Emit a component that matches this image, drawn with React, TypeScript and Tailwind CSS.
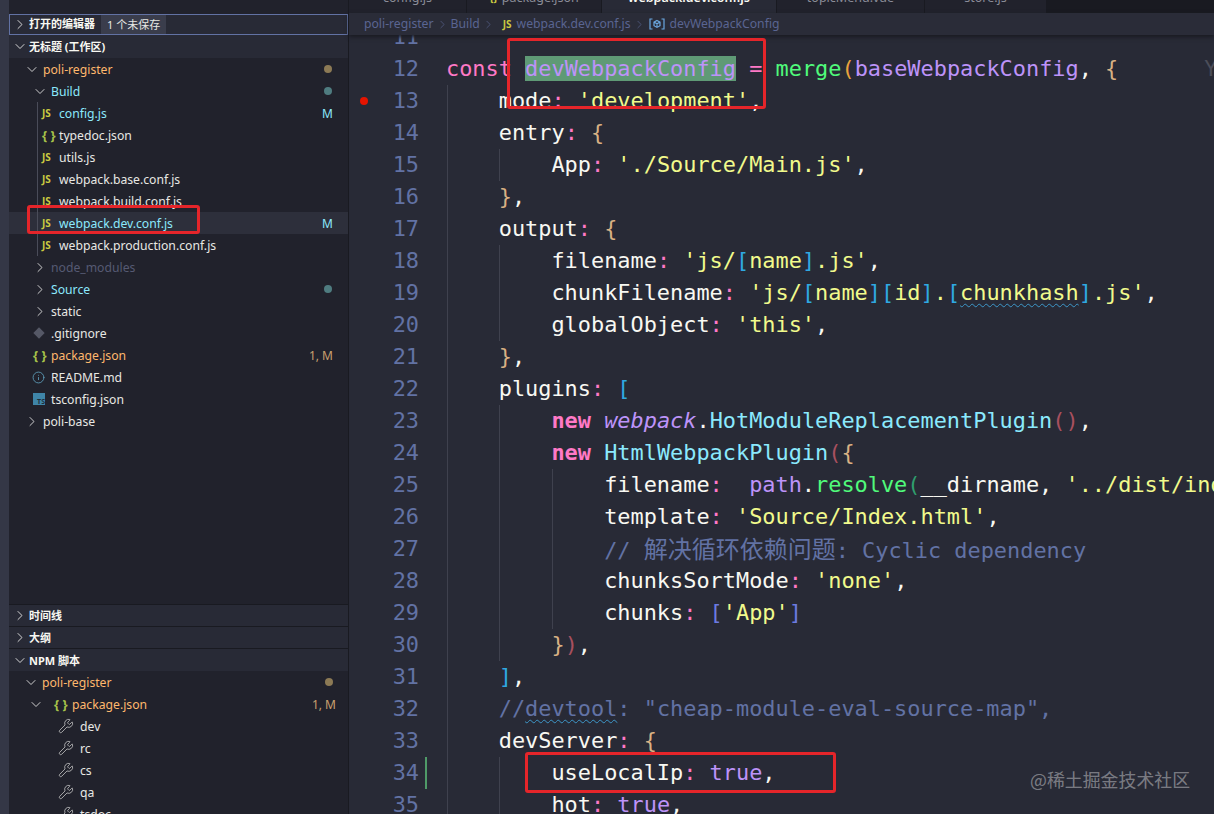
import React from "react";
import { ChevronRight, ChevronDown, Info, Wrench } from "lucide-react";

const SANS = "font-['Noto_Sans','Noto_Sans_CJK_SC',sans-serif]";

const W = ({ children }: { children: React.ReactNode }) => <span className="text-[#f8f8f2]">{children}</span>;
const P = ({ children }: { children: React.ReactNode }) => <span className="text-[#ff79c6]">{children}</span>;
const V = ({ children }: { children: React.ReactNode }) => <span className="text-[#bd93f9]">{children}</span>;
const G = ({ children }: { children: React.ReactNode }) => <span className="text-[#50fa7b]">{children}</span>;
const Y = ({ children }: { children: React.ReactNode }) => <span className="text-[#f1fa8c]">{children}</span>;
const C = ({ children }: { children: React.ReactNode }) => <span className="text-[#8be9fd]">{children}</span>;
const B = ({ children }: { children: React.ReactNode }) => <span className="text-[#d9b184]">{children}</span>;
const K = ({ children }: { children: React.ReactNode }) => <span className="text-[#6272a4]">{children}</span>;
const S = ({ children }: { children: React.ReactNode }) => <span className="text-[#2fa9e2]">{children}</span>;
const Q = ({ children }: { children: React.ReactNode }) => (
  <span className="underline decoration-wavy decoration-[#3d97c9] decoration-1 underline-offset-[3px]">{children}</span>
);

type Line = { n: number; g: number; code: React.ReactNode };

const lines: Line[] = [
  { n: 11, g: 0, code: null },
  {
    n: 12,
    g: 0,
    code: (
      <>
        <P>const</P> <span className="bg-[#5f9a76] text-[#bd93f9]">devWebpackConfig</span> <P>=</P> <G>merge</G>
        <span className="text-[#e8a33d]">(</span>
        <V>baseWebpackConfig</V>
        <W>,</W> <B>{"{"}</B>
        <span className="ml-[86px] text-[#4b4d59]">You</span>
      </>
    ),
  },
  { n: 13, g: 1, code: <>    <W>mode</W><P>:</P> <Y>'development'</Y><W>,</W></> },
  { n: 14, g: 1, code: <>    <W>entry</W><P>:</P> <B>{"{"}</B></> },
  { n: 15, g: 2, code: <>        <W>App</W><P>:</P> <Y>'./Source/Main.js'</Y><W>,</W></> },
  { n: 16, g: 1, code: <>    <B>{"}"}</B><W>,</W></> },
  { n: 17, g: 1, code: <>    <W>output</W><P>:</P> <B>{"{"}</B></> },
  { n: 18, g: 2, code: <>        <W>filename</W><P>:</P> <Y>'js/</Y><S>[</S><Y>name</Y><S>]</S><Y>.js'</Y><W>,</W></> },
  {
    n: 19,
    g: 2,
    code: (
      <>
        {"        "}<W>chunkFilename</W><P>:</P> <Y>'js/</Y><S>[</S><Y>name</Y><S>]</S><S>[</S><Y>id</Y><S>]</S><Y>.</Y><S>[</S>
        <span className="text-[#f1fa8c]"><Q>chunkhash</Q></span><S>]</S><Y>.js'</Y><W>,</W>
      </>
    ),
  },
  { n: 20, g: 2, code: <>        <W>globalObject</W><P>:</P> <Y>'this'</Y><W>,</W></> },
  { n: 21, g: 1, code: <>    <B>{"}"}</B><W>,</W></> },
  { n: 22, g: 1, code: <>    <W>plugins</W><P>:</P> <S>[</S></> },
  {
    n: 23,
    g: 2,
    code: (
      <>
        {"        "}<span className="font-bold text-[#ff79c6]">new</span> <span className="italic text-[#bd93f9]">webpack</span><W>.</W><C>HotModuleReplacementPlugin</C>
        <span className="text-[#a8505f]">()</span><W>,</W>
      </>
    ),
  },
  {
    n: 24,
    g: 2,
    code: (
      <>
        {"        "}<span className="font-bold text-[#ff79c6]">new</span> <C>HtmlWebpackPlugin</C><span className="text-[#a8505f]">(</span><B>{"{"}</B>
      </>
    ),
  },
  {
    n: 25,
    g: 3,
    code: (
      <>
        {"            "}<W>filename</W><P>:</P>  <V>path</V><W>.</W><G>resolve</G><span className="text-[#2f9e6e]">(</span><W>__dirname,</W> <Y>'../dist/index.html'</Y><W>,</W>
      </>
    ),
  },
  { n: 26, g: 3, code: <>            <W>template</W><P>:</P> <Y>'Source/Index.html'</Y><W>,</W></> },
  {
    n: 27,
    g: 3,
    code: (
      <>
        {"            "}<K>// </K>
        <span className="font-['Noto_Sans_CJK_SC',sans-serif] text-[24px] text-[#6272a4]">解决循环依赖问题</span>
        <K>: Cyclic dependency</K>
      </>
    ),
  },
  { n: 28, g: 3, code: <>            <W>chunksSortMode</W><P>:</P> <Y>'none'</Y><W>,</W></> },
  { n: 29, g: 3, code: <>            <W>chunks</W><P>:</P> <span className="text-[#6c7be0]">[</span><Y>'App'</Y><span className="text-[#6c7be0]">]</span></> },
  { n: 30, g: 2, code: <>        <B>{"}"}</B><span className="text-[#a8505f]">)</span><W>,</W></> },
  { n: 31, g: 1, code: <>    <S>]</S><W>,</W></> },
  { n: 32, g: 1, code: <>    <K>//<Q>devtool</Q>: "cheap-module-eval-source-map",</K></> },
  { n: 33, g: 1, code: <>    <W>devServer</W><P>:</P> <B>{"{"}</B></> },
  { n: 34, g: 2, code: <>        <W>useLocalIp</W><P>:</P> <V>true</V><W>,</W></> },
  { n: 35, g: 2, code: <>        <W>hot</W><P>:</P> <V>true</V><W>,</W></> },
];

const GUIDES = ["left-[98px]", "left-[150px]", "left-[203px]"];

function CodeLine({ line }: { line: Line }) {
  return (
    <div className="relative flex h-[32px] items-center">
      {GUIDES.slice(0, line.g).map((g) => (
        <span key={g} className={`absolute top-0 h-full w-px bg-[#3f414e] ${g}`} />
      ))}
      {line.n === 13 && <span className="absolute left-[11px] top-[12px] h-[8px] w-[8px] rounded-full bg-[#e51400]" />}
      {line.n === 34 && <span className="absolute left-[76px] top-0 h-full w-[2px] bg-[#4f9a68]" />}
      <span className="w-[70px] shrink-0 text-right text-[#6272a4]">{line.n}</span>
      <span className="relative ml-[27px] whitespace-pre text-[#f8f8f2]">{line.code}</span>
    </div>
  );
}

const Js = () => <span className="w-[14px] text-[10px] font-bold leading-none text-[#cbcb41]">JS</span>;
const Braces = () => <span className="w-[14px] text-[13px] font-bold leading-none text-[#a7c44a]">{"{ }"}</span>;

type RowProps = {
  pad: string;
  chevron?: "r" | "d";
  chevGap?: string;
  icon?: React.ReactNode;
  iconGap?: string;
  text: string;
  color?: string;
  right?: React.ReactNode;
  active?: boolean;
  endPad?: string;
};

function Row({ pad, chevron, chevGap = "mr-[3px]", icon, iconGap = "mr-[4px]", text, color = "text-[#e8e8e4]", right, active, endPad = "pr-[15px]" }: RowProps) {
  return (
    <div className={`flex h-[22px] items-center ${endPad} ${pad} ${active ? "bg-[#2d2f3b]" : ""}`}>
      {chevron && (
        <span className={`flex w-[16px] justify-center text-[#d8d8d8] ${chevGap}`}>
          {chevron === "r" ? <ChevronRight size={17} strokeWidth={1.4} /> : <ChevronDown size={17} strokeWidth={1.4} />}
        </span>
      )}
      {icon && <span className={`flex items-center ${iconGap}`}>{icon}</span>}
      <span className={`pt-[2px] text-[12.2px] leading-none ${color}`}>{text}</span>
      {right && <span className="ml-auto flex items-center">{right}</span>}
    </div>
  );
}

const Dot = ({ color }: { color: string }) => <span className={`mr-[1px] h-[8px] w-[8px] rounded-full ${color}`} />;
const Mod = ({ t, color }: { t: string; color: string }) => <span className={`pt-[2px] text-[12px] leading-none ${color}`}>{t}</span>;

function Header({ open, h = "h-[22px]", children }: { open?: boolean; h?: string; children: React.ReactNode }) {
  return (
    <div className={`flex shrink-0 items-center border-t border-[#191a21] pl-[3px] text-[11px] font-bold text-[#f8f8f2] ${h}`}>
      <span className="mr-[1px] flex w-[16px] justify-center text-[#e0e0e0]">
        {open ? <ChevronDown size={17} strokeWidth={1.4} /> : <ChevronRight size={17} strokeWidth={1.4} />}
      </span>
      <span className="pt-[2px]">{children}</span>
    </div>
  );
}

const Tab = ({ w, text, icon, active }: { w: string; text: string; icon?: React.ReactNode; active?: boolean }) => (
  <div className={`flex h-[13px] items-start justify-center overflow-hidden border-r border-[#191a21] ${w} ${active ? "bg-[#282a36]" : "bg-[#21222c]"}`}>
    <div className={`-mt-[11px] flex items-center gap-[4px] text-[12.5px] ${active ? "font-semibold text-[#f8f8f2]" : "text-[#8b8d98]"}`}>
      {icon}
      {text}
    </div>
  </div>
);

export default function App() {
  return (
    <div className={`relative flex h-[814px] w-[1214px] overflow-hidden bg-[#282a36] ${SANS}`}>
      <div className="w-[9px] shrink-0 bg-[#343746]" />

      <aside className="flex h-full w-[340px] shrink-0 flex-col overflow-hidden border-r border-[#191a21] bg-[#282a36]">
        <div className="h-[14px] shrink-0 overflow-hidden bg-[#21222c] pl-[20px] text-[11px] font-bold text-[#f8f8f2]">
          <div className="-mt-[14px]">资源管理器: 无标题</div>
        </div>
        <div className="flex h-[21px] shrink-0 items-center border border-[#6272a4] pl-[2px] text-[11px] font-bold text-[#f8f8f2]">
          <span className="mr-[1px] flex w-[16px] justify-center text-[#e0e0e0]">
            <ChevronRight size={17} strokeWidth={1.4} />
          </span>
          <span>打开的编辑器</span>
          <span className="ml-[6px] bg-[#3a3d4c] px-[6px] text-[11px] font-normal leading-[19px] text-[#e8e8e4]">1 个未保存</span>
        </div>
        <div className="flex h-[23px] shrink-0 items-center pl-[3px] text-[11px] font-bold text-[#f8f8f2]">
          <span className="mr-[1px] flex w-[16px] justify-center text-[#e0e0e0]">
            <ChevronDown size={17} strokeWidth={1.4} />
          </span>
          <span className="pt-[2px]">无标题 (工作区)</span>
        </div>

        <div className="relative h-[546px] shrink-0 bg-[#21222c]">
          <span className="absolute left-[28px] top-[44px] h-[154px] w-px bg-[#4a4c59]" />
          <Row pad="pl-[15px]" chevron="d" text="poli-register" color="text-[#ffb86c]" right={<Dot color="bg-[#8c7a55]" />} />
          <Row pad="pl-[23px]" chevron="d" text="Build" color="text-[#8be9fd]" right={<Dot color="bg-[#4f7c80]" />} />
          <Row pad="pl-[33px]" icon={<Js />} iconGap="mr-[3px]" text="config.js" color="text-[#8be9fd]" right={<Mod t="M" color="text-[#8be9fd]" />} />
          <Row pad="pl-[33px]" icon={<Braces />} iconGap="mr-[3px]" text="typedoc.json" />
          <Row pad="pl-[33px]" icon={<Js />} iconGap="mr-[3px]" text="utils.js" />
          <Row pad="pl-[33px]" icon={<Js />} iconGap="mr-[3px]" text="webpack.base.conf.js" />
          <Row pad="pl-[33px]" icon={<Js />} iconGap="mr-[3px]" text="webpack.build.conf.js" />
          <Row pad="pl-[33px]" icon={<Js />} iconGap="mr-[3px]" text="webpack.dev.conf.js" color="text-[#8be9fd]" active right={<Mod t="M" color="text-[#8be9fd]" />} />
          <Row pad="pl-[33px]" icon={<Js />} iconGap="mr-[3px]" text="webpack.production.conf.js" />
          <Row pad="pl-[23px]" chevron="r" text="node_modules" color="text-[#565a73]" />
          <Row pad="pl-[23px]" chevron="r" text="Source" color="text-[#8be9fd]" right={<Dot color="bg-[#4f7c80]" />} />
          <Row pad="pl-[23px]" chevron="r" text="static" />
          <Row
            pad="pl-[25px]"
            icon={<span className="ml-[1px] h-[8px] w-[8px] rotate-45 bg-[#555866]" />}
            iconGap="mr-[8px]"
            text=".gitignore"
          />
          <Row pad="pl-[24px]" icon={<Braces />} iconGap="mr-[4px]" text="package.json" color="text-[#ffb86c]" right={<Mod t="1, M" color="text-[#c9a06f]" />} />
          <Row pad="pl-[23px]" icon={<Info size={13} strokeWidth={1.6} className="text-[#5d9cb8]" />} iconGap="mr-[6px]" text="README.md" />
          <Row
            pad="pl-[24px]"
            icon={
              <span className="flex h-[12px] w-[12px] items-end justify-end bg-[#3f85a8] text-[7px] font-bold leading-none text-[#20303c]">TS</span>
            }
            iconGap="mr-[6px]"
            text="tsconfig.json"
          />
          <Row pad="pl-[15px]" chevron="r" text="poli-base" />
        </div>

        <Header>时间线</Header>
        <Header>大纲</Header>
        <Header open h="h-[23px]">NPM 脚本</Header>

        <div className="flex-1 bg-[#21222c]">
          <Row pad="pl-[14px]" endPad="pr-[14px]" chevron="d" chevGap="mr-[3px]" text="poli-register" color="text-[#ffb86c]" right={<Dot color="bg-[#8c7a55]" />} />
          <Row
            pad="pl-[19px]"
            endPad="pr-[12px]"
            chevron="d"
            chevGap="mr-[10px]"
            icon={<Braces />}
            iconGap="mr-[4px]"
            text="package.json"
            color="text-[#ffb86c]"
            right={<Mod t="1, M" color="text-[#c9a06f]" />}
          />
          {["dev", "rc", "cs", "qa", "tsdoc"].map((t) => (
            <Row key={t} pad="pl-[49px]" icon={<Wrench size={16} strokeWidth={1.2} className="text-[#c4c4c4]" />} iconGap="mr-[6px]" text={t} />
          ))}
        </div>
      </aside>

      <main className="flex h-full min-w-0 flex-1 flex-col">
        <div className="flex h-[13px] shrink-0 bg-[#191a21]">
          <Tab w="w-[118px]" text="config.js" />
          <Tab w="w-[135px]" text="package.json" icon={<span className="text-[11px] font-bold text-[#cbcb41]">{"{}"}</span>} />
          <Tab w="w-[175px]" text="webpack.dev.conf.js" active />
          <Tab w="w-[148px]" text="topicMenu.vue" />
          <Tab w="w-[122px]" text="store.js" />
        </div>
        <div className="relative z-10 flex h-[22px] shrink-0 items-center bg-[#2a2c38] pl-[15px] text-[12.2px] text-[#5a6592] shadow-[0_2px_4px_#191a21]">
          <span>poli-register</span>
          <ChevronRight size={13} strokeWidth={1.2} className="mx-[2px]" />
          <span>Build</span>
          <ChevronRight size={13} strokeWidth={1.2} className="mx-[2px]" />
          <span className="ml-[6px] mr-[5px] text-[10px] font-bold text-[#cbcb41]">JS</span>
          <span>webpack.dev.conf.js</span>
          <ChevronRight size={13} strokeWidth={1.2} className="mx-[2px]" />
          <svg width="16" height="14" viewBox="0 0 16 14" fill="none" stroke="#6aa7e0" strokeWidth="1.2" className="ml-[1px] mr-[5px]">
            <path d="M3.5 2H1v10h2.5M12.5 2H15v10h-2.5" />
            <path d="M8 3.5l3 1.6v3.6l-3 1.700-3-1.700V5.100z M5 5.100l3 1.700 3-1.700M8 6.800v3.600" />
          </svg>
          <span>devWebpackConfig</span>
        </div>
        <div className="-mt-[14px] overflow-hidden font-['DejaVu_Sans_Mono',monospace] text-[21.9px] leading-[32px]">
          {lines.map((l) => (
            <CodeLine key={l.n} line={l} />
          ))}
        </div>
      </main>

      <div className="absolute left-[27px] top-[205px] h-[29px] w-[173px] rounded-[3px] border-[3px] border-[#e5252a]" />
      <div className="absolute left-[507px] top-[38px] z-20 h-[71px] w-[259px] rounded-[3px] border-[3px] border-[#e5252a]" />
      <div className="absolute left-[525px] top-[752px] h-[41px] w-[311px] rounded-[3px] border-[3px] border-[#e5252a]" />
      <div className="absolute left-[1030px] top-[766px] font-['Noto_Sans_CJK_SC',sans-serif] text-[17.900px] text-[#ffffff]/40">@稀土掘金技术社区</div>
    </div>
  );
}
